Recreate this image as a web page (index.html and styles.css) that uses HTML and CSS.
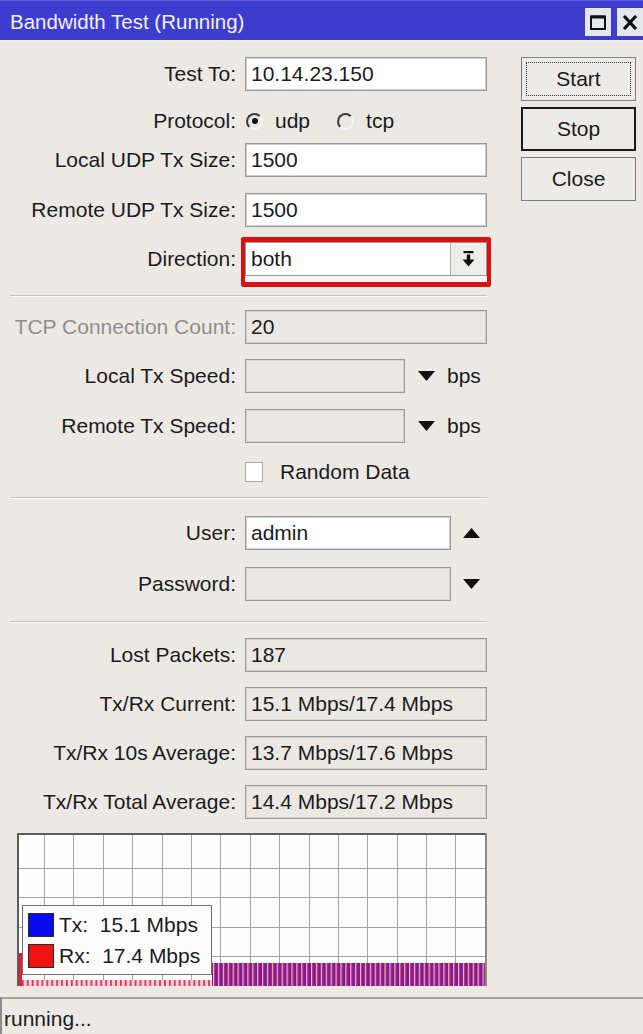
FILE: index.html
```html
<!DOCTYPE html>
<html>
<head>
<meta charset="utf-8">
<title>Bandwidth Test (Running)</title>
<link rel="stylesheet" href="styles.css">
</head>
<body>
<div class="window">
  <div class="titlebar">
    <span class="title">Bandwidth Test (Running)</span>
    <div class="tb-btns">
      <span class="tb-btn"><svg width="16" height="15" viewBox="0 0 16 15"><rect x="1" y="1.5" width="14" height="12.5" fill="none" stroke="#111" stroke-width="2"/><rect x="1" y="0.5" width="14" height="3" fill="#111"/></svg></span>
      <span class="tb-btn"><svg width="16" height="15" viewBox="0 0 16 15"><path d="M2 1 L14 14 M14 1 L2 14" stroke="#111" stroke-width="3.2"/></svg></span>
    </div>
  </div>
  <div class="content">
    <div class="form">
      <div class="row">
        <span class="label">Test To:</span>
        <div class="field">10.14.23.150</div>
      </div>
      <div class="row row-small mt-19">
        <span class="label">Protocol:</span>
        <span class="radio checked"></span><span class="radio-text">udp</span>
        <span class="radio radio-second"></span><span class="radio-text">tcp</span>
      </div>
      <div class="row mt-11">
        <span class="label">Local UDP Tx Size:</span>
        <div class="field">1500</div>
      </div>
      <div class="row mt-16">
        <span class="label">Remote UDP Tx Size:</span>
        <div class="field">1500</div>
      </div>
      <div class="row mt-15">
        <span class="label">Direction:</span>
        <div class="redbox">
          <div class="combo">
            <span class="combo-text">both</span>
            <span class="combo-btn"><svg width="13" height="17" viewBox="0 0 13 17"><rect x="1.5" y="0" width="10" height="2.2" fill="#111"/><rect x="4.8" y="3.5" width="3.4" height="6" fill="#111"/><path d="M0.5 8.5 L12.5 8.5 L6.5 15.5 Z" fill="#111"/></svg></span>
          </div>
        </div>
      </div>
      <div class="sep mt-19"></div>
      <div class="row mt-13">
        <span class="label disabled-label">TCP Connection Count:</span>
        <div class="field disabled">20</div>
      </div>
      <div class="row mt-15">
        <span class="label">Local Tx Speed:</span>
        <div class="field disabled short"></div>
        <svg class="arrow arrow-speed" width="17" height="10" viewBox="0 0 17 10"><path d="M0 0 L17 0 L8.5 10 Z" fill="#111"/></svg>
        <span class="unit">bps</span>
      </div>
      <div class="row mt-16">
        <span class="label">Remote Tx Speed:</span>
        <div class="field disabled short"></div>
        <svg class="arrow arrow-speed" width="17" height="10" viewBox="0 0 17 10"><path d="M0 0 L17 0 L8.5 10 Z" fill="#111"/></svg>
        <span class="unit">bps</span>
      </div>
      <div class="row row-small mt-18 indent">
        <span class="check"></span><span class="check-text">Random Data</span>
      </div>
      <div class="sep mt-14"></div>
      <div class="row mt-17">
        <span class="label">User:</span>
        <div class="field mid">admin</div>
        <svg class="arrow arrow-user" width="17" height="10" viewBox="0 0 17 10"><path d="M0 10 L17 10 L8.5 0 Z" fill="#111"/></svg>
      </div>
      <div class="row mt-17">
        <span class="label">Password:</span>
        <div class="field disabled mid"></div>
        <svg class="arrow arrow-user" width="17" height="10" viewBox="0 0 17 10"><path d="M0 0 L17 0 L8.5 10 Z" fill="#111"/></svg>
      </div>
      <div class="sep mt-20"></div>
      <div class="row mt-15">
        <span class="label">Lost Packets:</span>
        <div class="field disabled">187</div>
      </div>
      <div class="row mt-15">
        <span class="label">Tx/Rx Current:</span>
        <div class="field disabled">15.1 Mbps/17.4 Mbps</div>
      </div>
      <div class="row mt-15">
        <span class="label">Tx/Rx 10s Average:</span>
        <div class="field disabled">13.7 Mbps/17.6 Mbps</div>
      </div>
      <div class="row mt-15">
        <span class="label">Tx/Rx Total Average:</span>
        <div class="field disabled">14.4 Mbps/17.2 Mbps</div>
      </div>
      <div class="graph">
        <svg width="470" height="153" viewBox="0 0 470 153">
          <defs>
            <pattern id="tall" width="4.9" height="23" patternUnits="userSpaceOnUse">
              <rect x="0" y="0" width="1" height="23" fill="#f2b8d2"/>
              <rect x="1" y="0" width="1" height="23" fill="#d82a62"/>
              <rect x="2" y="0" width="2.9" height="23" fill="#7a1d94"/>
            </pattern>
            <pattern id="short" width="4.9" height="6" patternUnits="userSpaceOnUse">
              <rect x="0" y="0" width="4.9" height="6" fill="#f7d3df"/>
              <rect x="0" y="0" width="1.8" height="6" fill="#e2304e"/>
            </pattern>
          </defs>
          <rect x="0" y="0" width="470" height="153" fill="#fefefe"/>
          <g stroke="#a4a4a4" stroke-width="1">
            <path d="M27.5 0V153 M56.5 0V153 M86.5 0V153 M115.5 0V153 M145.5 0V153 M174.5 0V153 M203.5 0V153 M233.5 0V153 M262.5 0V153 M292.5 0V153 M321.5 0V153 M350.5 0V153 M380.5 0V153 M409.5 0V153 M438.5 0V153"/>
            <path d="M0 35.5H470 M0 64.5H470 M0 94.5H470 M0 123.5H470"/>
          </g>
          <rect x="3" y="147" width="192" height="6" fill="url(#short)"/>
          <rect x="195" y="130" width="273" height="23" fill="url(#tall)"/>
          <rect x="2" y="120" width="3" height="33" fill="#e02232"/>
          <rect x="0" y="0" width="470" height="2" fill="#5c5c5c"/>
          <rect x="0" y="0" width="2" height="153" fill="#5c5c5c"/>
          <rect x="468" y="0" width="2" height="153" fill="#8a8a8a"/>
        </svg>
        <div class="legend">
          <div class="legend-row"><span class="swatch tx"></span><span class="legend-text">Tx:  15.1 Mbps</span></div>
          <div class="legend-row"><span class="swatch rx"></span><span class="legend-text">Rx:  17.4 Mbps</span></div>
        </div>
      </div>
    </div>
    <div class="buttons">
      <div class="btn focus">Start</div>
      <div class="btn default">Stop</div>
      <div class="btn">Close</div>
    </div>
  </div>
  <div class="status">running...</div>
</div>
</body>
</html>
```
FILE: styles.css
```css
html, body {
  margin: 0;
  padding: 0;
}
body {
  background: #ece9e5;
  font-family: "Liberation Sans", Arial, sans-serif;
  font-size: 21px;
  color: #1b1b1b;
}
.window {
  width: 643px;
  height: 1034px;
  display: flex;
  flex-direction: column;
  overflow: hidden;
}
.titlebar {
  height: 42px;
  box-sizing: border-box;
  background: #3c3cce;
  border-top: 1px solid #5a5ad8;
  border-bottom: 2px solid #f3f3f5;
  display: flex;
  justify-content: space-between;
  align-items: center;
  padding-left: 10px;
}
.title {
  color: #f2f2ff;
  font-size: 20.5px;
  margin-top: 2px;
}
.tb-btns {
  display: flex;
  gap: 6px;
  align-self: flex-start;
  margin-top: 7px;
}
.tb-btn {
  width: 26px;
  height: 28px;
  background: #e6e6ee;
  display: flex;
  align-items: center;
  justify-content: center;
}
.content {
  flex: 1;
  display: flex;
  padding-top: 15px;
}
.form {
  width: 490px;
  display: flex;
  flex-direction: column;
}
.row {
  display: flex;
  align-items: center;
  height: 34px;
  margin-top: 15px;
}
.row:first-child { margin-top: 0; }
.row-small { height: 22px; }
.mt-11 { margin-top: 11px; }
.mt-13 { margin-top: 13px; }
.mt-14 { margin-top: 14px; }
.mt-15 { margin-top: 15px; }
.mt-16 { margin-top: 16px; }
.mt-17 { margin-top: 17px; }
.mt-18 { margin-top: 18px; }
.mt-19 { margin-top: 19px; }
.mt-20 { margin-top: 20px; }
.label {
  width: 245px;
  flex: none;
  box-sizing: border-box;
  padding-right: 9px;
  text-align: right;
  white-space: nowrap;
}
.disabled-label { color: #8e8e8e; }
.field {
  box-sizing: border-box;
  width: 242px;
  height: 34px;
  flex: none;
  border: 1px solid #999;
  box-shadow: inset 0 0 0 1px #d4d2ce;
  background: #fff;
  padding-left: 5px;
  display: flex;
  align-items: center;
  white-space: nowrap;
}
.field.disabled { background: #ebe8e4; }
.field.short { width: 160px; }
.field.mid { width: 206px; }
.radio {
  width: 17px;
  height: 17px;
  box-sizing: border-box;
  border-radius: 50%;
  border: 2px solid;
  border-color: #3a3a3a #f4f4f4 #f4f4f4 #3a3a3a;
  margin-left: 1px;
  position: relative;
  flex: none;
}
.radio.checked::after {
  content: "";
  position: absolute;
  left: 3.5px;
  top: 3.5px;
  width: 6px;
  height: 6px;
  border-radius: 50%;
  background: #111;
}
.radio-second { margin-left: 27px; }
.radio-text { margin-left: 12px; }
.redbox {
  border: 5px solid #d81212;
  border-left-width: 4px;
  border-right-width: 4px;
  border-radius: 2px;
  padding-bottom: 6px;
  margin: -5px -4px -11px -4px;
  background: #fbf4f4;
}
.combo {
  box-sizing: border-box;
  width: 242px;
  height: 34px;
  border: 1px solid #999;
  background: #fff;
  display: flex;
}
.combo-text {
  flex: 1;
  padding-left: 5px;
  display: flex;
  align-items: center;
}
.combo-btn {
  width: 35px;
  border-left: 1px solid #b0b0b0;
  background: #efedea;
  display: flex;
  align-items: center;
  justify-content: center;
}
.sep {
  margin-left: 10px;
  width: 477px;
  height: 0;
  border-top: 1px solid #c3c0bb;
  border-bottom: 1px solid #fbfbfa;
}
.arrow { flex: none; }
.arrow-speed { margin-left: 13px; }
.arrow-user { margin-left: 12px; }
.unit { margin-left: 12px; }
.indent { padding-left: 245px; }
.check {
  width: 18px;
  height: 20px;
  box-sizing: border-box;
  border: 1px solid #a9a9a9;
  background: #fff;
  flex: none;
}
.check-text { margin-left: 17px; }
.graph {
  margin-top: 14px;
  margin-left: 17px;
  width: 470px;
  height: 153px;
  position: relative;
}
.graph svg { display: block; }
.legend {
  position: absolute;
  left: 5px;
  top: 72px;
  width: 190px;
  height: 70px;
  box-sizing: border-box;
  border: 1px solid #707070;
  background: #fcfcfc;
  padding: 7px 5px;
  display: flex;
  flex-direction: column;
  gap: 7px;
}
.legend-row {
  display: flex;
  align-items: center;
  height: 24px;
}
.swatch {
  width: 26px;
  height: 24px;
  box-sizing: border-box;
  border: 1px solid #2a2a2a;
  flex: none;
}
.swatch.tx { background: #0a0af2; }
.swatch.rx { background: #f01212; }
.legend-text {
  margin-left: 5px;
  white-space: pre;
}
.buttons {
  margin-left: 31px;
  display: flex;
  flex-direction: column;
  gap: 6px;
}
.btn {
  width: 115px;
  height: 44px;
  box-sizing: border-box;
  border: 1px solid #7c7c7c;
  background: #edebe7;
  display: flex;
  align-items: center;
  justify-content: center;
  position: relative;
}
.btn.focus::after {
  content: "";
  position: absolute;
  left: 4px;
  top: 4px;
  right: 4px;
  bottom: 4px;
  border: 1px dotted #333;
}
.btn.default { border: 2px solid #1a1a1a; }
.status {
  height: 37px;
  box-sizing: border-box;
  border-top: 2px solid #a5a3a0;
  border-left: 2px solid #8c8c8c;
  padding: 4px 0 0 2px;
  display: flex;
  align-items: center;
}
```
